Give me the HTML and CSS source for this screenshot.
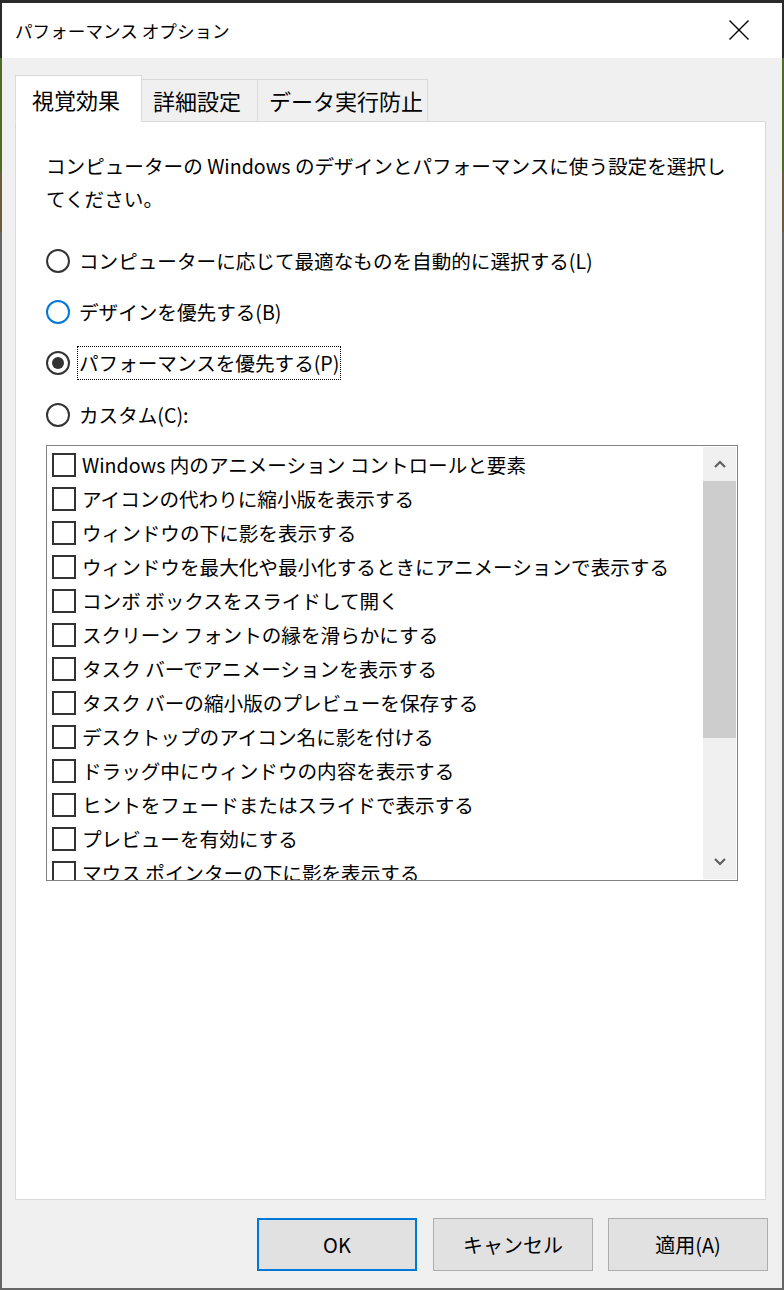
FILE: index.html
```html
<!DOCTYPE html>
<html lang="ja">
<head>
    <meta charset="UTF-8">
    <meta name="viewport" content="width=device-width, initial-scale=1.0">
    <title>パフォーマンス オプション</title>
    <link rel="stylesheet" href="styles.css">
</head>
<body>
    <div class="window">
        <div class="titlebar">
            <span class="title">パフォーマンス オプション</span>
            <button class="close" aria-label="閉じる">
                <svg width="20" height="20" viewBox="0 0 20 20">
                    <path d="M0.5 0.5 L19.5 19.5 M19.5 0.5 L0.5 19.5" stroke="#000" stroke-width="1.4" fill="none"/>
                </svg>
            </button>
        </div>

        <div class="content">
            <div class="tabs">
                <div class="tab active">視覚効果</div>
                <div class="tab second">詳細設定</div>
                <div class="tab third">データ実行防止</div>
            </div>

            <div class="panel">
                <p class="desc">コンピューターの Windows のデザインとパフォーマンスに使う設定を選択し<br>てください。</p>

                <div class="radios">
                    <div class="radio-row"><span class="radio"></span><span class="label">コンピューターに応じて最適なものを自動的に選択する(L)</span></div>
                    <div class="radio-row"><span class="radio hover"></span><span class="label">デザインを優先する(B)</span></div>
                    <div class="radio-row"><span class="radio checked"></span><span class="label focus">パフォーマンスを優先する(P)</span></div>
                    <div class="radio-row"><span class="radio"></span><span class="label">カスタム(C):</span></div>
                </div>

                <div class="listbox">
                    <div class="items" id="items"></div>
                    <div class="scrollbar">
                        <div class="arrow">
                            <svg width="12" height="8" viewBox="0 0 12 8"><path d="M1 7 L6 2 L11 7" stroke="#606060" stroke-width="2.2" fill="none"/></svg>
                        </div>
                        <div class="track">
                            <div class="thumb"></div>
                        </div>
                        <div class="arrow">
                            <svg width="12" height="8" viewBox="0 0 12 8"><path d="M1 1 L6 6 L11 1" stroke="#606060" stroke-width="2.2" fill="none"/></svg>
                        </div>
                    </div>
                </div>
            </div>

            <div class="footer">
                <button class="btn default">OK</button>
                <button class="btn">キャンセル</button>
                <button class="btn">適用(A)</button>
            </div>
        </div>
    </div>

    <script>
        const effects = [
            "Windows 内のアニメーション コントロールと要素",
            "アイコンの代わりに縮小版を表示する",
            "ウィンドウの下に影を表示する",
            "ウィンドウを最大化や最小化するときにアニメーションで表示する",
            "コンボ ボックスをスライドして開く",
            "スクリーン フォントの縁を滑らかにする",
            "タスク バーでアニメーションを表示する",
            "タスク バーの縮小版のプレビューを保存する",
            "デスクトップのアイコン名に影を付ける",
            "ドラッグ中にウィンドウの内容を表示する",
            "ヒントをフェードまたはスライドで表示する",
            "プレビューを有効にする",
            "マウス ポインターの下に影を表示する"
        ];

        const list = document.getElementById("items");
        effects.forEach(text => {
            const row = document.createElement("div");
            row.className = "item";
            const box = document.createElement("span");
            box.className = "checkbox";
            const label = document.createElement("span");
            label.textContent = text;
            row.appendChild(box);
            row.appendChild(label);
            list.appendChild(row);
        });
    </script>
</body>
</html>
```

FILE: styles.css
```css
* {
    box-sizing: border-box;
}
body {
    margin: 0;
    height: 1290px;
    overflow: hidden;
    font-family: "Noto Sans CJK JP", "Noto Sans", sans-serif;
    color: #000;
    background: linear-gradient(to bottom, #2b2b2b 0 58px, #4d6a26 58px 172px, #6a5b3e 172px 232px, #666 232px);
    padding: 3px 2px 2px 2px;
}
.window {
    height: 1285px;
    background-color: #f0f0f0;
    display: flex;
    flex-direction: column;
}
.titlebar {
    height: 55px;
    background-color: #fff;
    display: flex;
    align-items: center;
    justify-content: space-between;
    padding-left: 13px;
}
.title {
    font-size: 17.6px;
    margin-top: -1px;
}
.close {
    width: 60px;
    height: 55px;
    border: none;
    background: transparent;
    display: flex;
    align-items: center;
    justify-content: center;
    padding: 0;
    margin-right: 13px;
    margin-top: -1px;
}
.content {
    flex: 1;
    padding: 17px 14px 0 13px;
    display: flex;
    flex-direction: column;
}
.tabs {
    display: flex;
    align-items: flex-end;
    height: 47px;
    position: relative;
    z-index: 1;
    margin-bottom: -1px;
}
.tab {
    height: 43px;
    padding: 0 0 0 11px;
    font-size: 22px;
    line-height: 41px;
    border: 1px solid #d9d9d9;
    border-left: none;
    background-color: #f0f0f0;
    white-space: nowrap;
}
.tab.second {
    width: 116px;
}
.tab.third {
    width: 170px;
}
.tab.active {
    height: 47px;
    width: 127px;
    padding-left: 16px;
    border-left: 1px solid #d9d9d9;
    border-bottom-color: #fff;
    background-color: #fff;
    line-height: 47px;
}
.panel {
    height: 1079px;
    margin-right: 2px;
    background-color: #fff;
    border: 1px solid #d9d9d9;
    padding: 27px 0 0 30px;
}
.desc {
    margin: 0;
    font-size: 19.6px;
    line-height: 33px;
}
.radios {
    margin-top: 20px;
}
.radio-row {
    height: 51.4px;
    display: flex;
    align-items: center;
}
.radio {
    width: 24px;
    height: 24px;
    border: 2px solid #333;
    border-radius: 50%;
    display: flex;
    align-items: center;
    justify-content: center;
    margin-right: 7px;
}
.radio.hover {
    border-color: #0078d7;
}
.radio.checked::after {
    content: "";
    width: 12px;
    height: 12px;
    border-radius: 50%;
    background-color: #333;
}
.label {
    font-size: 19.6px;
    line-height: 32px;
    padding: 0 1px;
    border: 1px solid transparent;
}
.label.focus {
    border: 1px dotted #000;
}
.listbox {
    margin-top: 4px;
    width: 692px;
    height: 436px;
    border: 1px solid #828282;
    display: flex;
}
.items {
    flex: 1;
    overflow: hidden;
    padding: 2px 0 0 5px;
}
.item {
    height: 34px;
    display: flex;
    align-items: center;
    font-size: 19.6px;
    white-space: nowrap;
}
.checkbox {
    width: 24px;
    height: 24px;
    flex: none;
    border: 2px solid #333;
    margin-right: 6px;
}
.scrollbar {
    width: 33px;
    margin: 1px 1px 1px 0;
    background-color: #f0f0f0;
    display: flex;
    flex-direction: column;
}
.arrow {
    height: 34px;
    display: flex;
    align-items: center;
    justify-content: center;
}
.track {
    flex: 1;
}
.thumb {
    height: 257px;
    background-color: #cdcdcd;
}
.footer {
    display: flex;
    justify-content: flex-end;
    gap: 15px;
    margin-top: 18px;
}
.btn {
    width: 160px;
    height: 53px;
    font-family: inherit;
    font-size: 20px;
    color: #000;
    background-color: #e1e1e1;
    border: 1px solid #adadad;
    padding: 0;
}
.btn.default {
    border: 2px solid #0078d7;
    margin-right: 1px;
}
```
